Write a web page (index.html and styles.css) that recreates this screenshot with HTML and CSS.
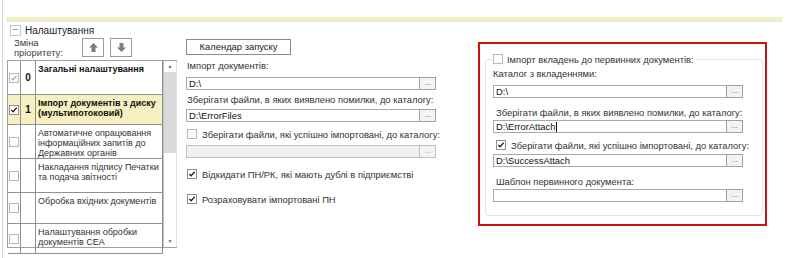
FILE: index.html
```html
<!DOCTYPE html>
<html lang="uk">
<head>
    <meta charset="UTF-8">
    <title>Налаштування</title>
    <link rel="stylesheet" href="styles.css">
</head>
<body>
<div class="page">
    <div class="top-gap"></div>
    <div class="yellow-bar"></div>

    <div class="panel">
        <div class="panel-head">
            <span class="collapse">&minus;</span>
            <span class="panel-title">Налаштування</span>
        </div>

        <div class="panel-body">
            <div class="left-col">
                <div class="priority">
                    <span class="priority-label">Зміна<br>пріоритету:</span>
                    <span class="arrow-btn">
                        <svg width="11" height="11" viewBox="0 0 11 11"><path d="M5.5 1 L10 5.5 H7.5 V10 H3.5 V5.5 H1 Z" fill="#7d7d7d"/></svg>
                    </span>
                    <span class="arrow-btn">
                        <svg width="11" height="11" viewBox="0 0 11 11"><path d="M5.5 10 L10 5.5 H7.5 V1 H3.5 V5.5 H1 Z" fill="#7d7d7d"/></svg>
                    </span>
                </div>

                <div class="grid-wrap">
                    <table class="tasks">
                        <tr class="r0">
                            <td class="c-check"><span class="cb cb-off"><svg viewBox="0 0 9 9"><path d="M1.5 4.5 L3.5 6.5 L7.5 2" stroke="#b0b0b0" stroke-width="1.4" fill="none"/></svg></span></td>
                            <td class="c-num">0</td>
                            <td class="c-name bold">Загальні налаштування</td>
                        </tr>
                        <tr class="r1 selected">
                            <td class="c-check"><span class="cb"><svg viewBox="0 0 9 9"><path d="M1.5 4.5 L3.5 6.5 L7.5 2" stroke="#222" stroke-width="1.4" fill="none"/></svg></span></td>
                            <td class="c-num">1</td>
                            <td class="c-name bold">Імпорт документів з диску (мультипотоковий)</td>
                        </tr>
                        <tr class="r2">
                            <td class="c-check"><span class="cb cb-off"></span></td>
                            <td class="c-num"></td>
                            <td class="c-name">Автоматичне опрацювання інформаційних запитів до Державних органів</td>
                        </tr>
                        <tr class="r3">
                            <td class="c-check"><span class="cb cb-off"></span></td>
                            <td class="c-num"></td>
                            <td class="c-name">Накладання підпису Печатки та подача звітності</td>
                        </tr>
                        <tr class="r4">
                            <td class="c-check"><span class="cb cb-off"></span></td>
                            <td class="c-num"></td>
                            <td class="c-name">Обробка вхідних документів</td>
                        </tr>
                        <tr class="r5">
                            <td class="c-check"><span class="cb cb-off"></span></td>
                            <td class="c-num"></td>
                            <td class="c-name">Налаштування обробки документів СЕА</td>
                        </tr>
                    </table>
                    <div class="scrollbar">
                        <span class="sb-arrow">&#9650;</span>
                        <span class="sb-thumb"></span>
                        <span class="sb-track"></span>
                        <span class="sb-arrow">&#9660;</span>
                    </div>
                </div>
            </div>

            <div class="mid-col">
                <div class="btn">Календар запуску</div>
                <div class="label first">Імпорт документів:</div>
                <div class="field"><span class="field-value">D:\</span><span class="browse">...</span></div>
                <div class="label">Зберігати файли, в яких виявлено помилки, до каталогу:</div>
                <div class="field"><span class="field-value">D:\ErrorFiles</span><span class="browse">...</span></div>
                <div class="check-line"><span class="cb cb-off"></span>Зберігати файли, які успішно імпортовані, до каталогу:</div>
                <div class="field disabled"><span class="field-value"></span><span class="browse">...</span></div>
                <div class="check-line spaced"><span class="cb"><svg viewBox="0 0 9 9"><path d="M1.5 4.5 L3.5 6.5 L7.5 2" stroke="#222" stroke-width="1.4" fill="none"/></svg></span>Відкидати ПН/РК, які мають дублі в підприємстві</div>
                <div class="check-line spaced"><span class="cb"><svg viewBox="0 0 9 9"><path d="M1.5 4.5 L3.5 6.5 L7.5 2" stroke="#222" stroke-width="1.4" fill="none"/></svg></span>Розраховувати імпортовані ПН</div>
            </div>

            <div class="right-col">
                <div class="group">
                    <div class="legend"><span class="cb cb-off"></span>Імпорт вкладень до первинних документів:</div>
                    <div class="label">Каталог з вкладеннями:</div>
                    <div class="field"><span class="field-value">D:\</span><span class="browse">...</span></div>
                    <div class="label indent gap">Зберігати файли, в яких виявлено помилки, до каталогу:</div>
                    <div class="field"><span class="field-value">D:\ErrorAttach<span class="caret"></span></span><span class="browse">...</span></div>
                    <div class="check-line indent"><span class="cb"><svg viewBox="0 0 9 9"><path d="M1.5 4.5 L3.5 6.5 L7.5 2" stroke="#222" stroke-width="1.4" fill="none"/></svg></span>Зберігати файли, які успішно імпортовані, до каталогу:</div>
                    <div class="field"><span class="field-value">D:\SuccessAttach</span><span class="browse">...</span></div>
                    <div class="label indent gap">Шаблон первинного документа:</div>
                    <div class="field"><span class="field-value"></span><span class="browse">...</span></div>
                </div>
            </div>
        </div>
    </div>
</div>
</body>
</html>
```

FILE: styles.css
```css
body {
    margin: 0;
    background: #fff;
    font-family: "Liberation Sans", Arial, sans-serif;
    font-size: 9.4px;
    color: #333;
}
.page {
    margin-left: 2px;
    border-left: 1px solid #d4d4d4;
    height: 258px;
    overflow: hidden;
}
.top-gap {
    height: 17px;
}
.yellow-bar {
    height: 4px;
    margin: 0 6px 0 3px;
    background: #f6f1c1;
}
.panel {
    margin: 0 6px 0 4px;
    border-top: 1px solid #dfe7ec;
}
.panel-head {
    display: flex;
    align-items: center;
    height: 16px;
    padding-left: 3px;
}
.collapse {
    width: 9px;
    height: 9px;
    border: 1px solid #c8c8c8;
    color: #777;
    font-size: 10px;
    line-height: 8px;
    text-align: center;
    margin-right: 4px;
}
.panel-title {
    font-size: 10px;
    color: #222;
}
.panel-body {
    display: flex;
    align-items: flex-start;
}

/* left column */
.left-col {
    width: 170px;
}
.priority {
    display: flex;
    align-items: flex-start;
    height: 22px;
    padding-left: 7px;
}
.priority-label {
    width: 68px;
    line-height: 10px;
    color: #444;
}
.arrow-btn {
    width: 20px;
    height: 17px;
    border: 1px solid #9a9a9a;
    display: flex;
    align-items: center;
    justify-content: center;
    margin-right: 6px;
}
.grid-wrap {
    display: flex;
    border: 1px solid #a0a0a0;
    border-right: none;
    height: 186px;
}
.tasks {
    border-collapse: collapse;
    width: 157px;
    table-layout: fixed;
    align-self: flex-start;
}
.tasks td {
    border: 1px solid #909090;
    padding: 0;
    vertical-align: middle;
}
.tasks tr:first-child td {
    border-top: none;
}
.tasks td.c-check {
    border-left: none;
    width: 12px;
    text-align: center;
}
.c-num {
    width: 14px;
    text-align: center;
    font-weight: bold;
    font-size: 10px;
    color: #111;
}
.c-name {
    vertical-align: top !important;
    padding: 3px 0 0 2px !important;
    line-height: 10px;
    font-size: 9px;
    color: #333;
}
.c-name.bold {
    font-weight: bold;
    color: #111;
}
.r0 { height: 33px; }
.r1 { height: 30px; }
.r2 { height: 33px; }
.r3 { height: 34px; }
.r4 { height: 31px; }
.r5 { height: 30px; }
.selected td {
    background: #f6efc2;
}
.scrollbar {
    width: 12px;
    display: flex;
    flex-direction: column;
    border-left: 1px solid #c0c0c0;
    border-right: 1px solid #e0e0e0;
}
.sb-arrow {
    height: 11px;
    font-size: 5px;
    line-height: 11px;
    text-align: center;
    color: #5a6a88;
}
.sb-thumb {
    height: 81px;
    background: #dadada;
}
.sb-track {
    flex: 1;
}

/* checkboxes */
.cb {
    display: inline-block;
    width: 8px;
    height: 8px;
    border: 1px solid #8e8e8e;
    background: #fff;
    vertical-align: middle;
    position: relative;
    flex: none;
}
.cb svg {
    position: absolute;
    left: 0;
    top: 0;
    width: 8px;
    height: 8px;
}
.cb-off {
    border-color: #b8b8b8;
}

/* middle column */
.mid-col {
    width: 250px;
    margin-left: 9px;
    padding-top: 1px;
    white-space: nowrap;
}
.btn {
    width: 103px;
    height: 14px;
    border: 1px solid #8a8a8a;
    text-align: center;
    line-height: 14px;
    color: #222;
}
.label {
    height: 12px;
    line-height: 12px;
    margin: 4px 0 3px 1px;
    color: #333;
}
.label.first {
    margin-top: 5px;
    margin-bottom: 5px;
}
.field {
    display: flex;
    height: 11px;
    border: 1px solid #a9a9a9;
    background: #fff;
}
.field-value {
    flex: 1;
    padding-left: 2px;
    line-height: 11px;
    color: #111;
    display: flex;
    align-items: center;
}
.browse {
    width: 15px;
    margin: -1px -1px -1px 0;
    border: 1px solid #a0a0a0;
    background: #f3f3f3;
    font-size: 8px;
    line-height: 9px;
    text-align: center;
    color: #667;
}
.field.disabled {
    background: #f0f0f0;
    border-color: #c0c0c0;
}
.field.disabled .browse {
    color: #aaa;
    border-color: #c0c0c0;
}
.check-line {
    display: flex;
    align-items: center;
    height: 12px;
    margin: 6px 0 5px 1px;
    color: #333;
}
.check-line .cb {
    margin-right: 5px;
}
.check-line.spaced {
    margin-top: 10px;
    margin-bottom: 13px;
}

/* right column */
.right-col {
    width: 278px;
    margin-left: 42px;
    margin-top: 4px;
    border: 2px solid #cc1111;
    padding: 15px 2px 8px 5px;
    white-space: nowrap;
}
.group {
    border: 1px solid #dfe6eb;
    border-radius: 3px;
    padding: 0 19px 13px 7px;
}
.legend {
    display: flex;
    align-items: center;
    height: 12px;
    margin-top: -7px;
    background: #fff;
    width: max-content;
    padding-right: 2px;
    color: #333;
}
.legend .cb {
    margin-right: 4px;
}
.group .label {
    margin: 3px 0 5px 0;
}
.group .label.indent,
.group .check-line.indent {
    margin-left: 3px;
}
.group .label.gap {
    margin-top: 9px;
    margin-bottom: 1px;
}
.group .check-line {
    margin: 6px 0 3px 3px;
}
.caret {
    display: inline-block;
    width: 1px;
    height: 10px;
    background: #111;
    margin-left: 1px;
}
```
